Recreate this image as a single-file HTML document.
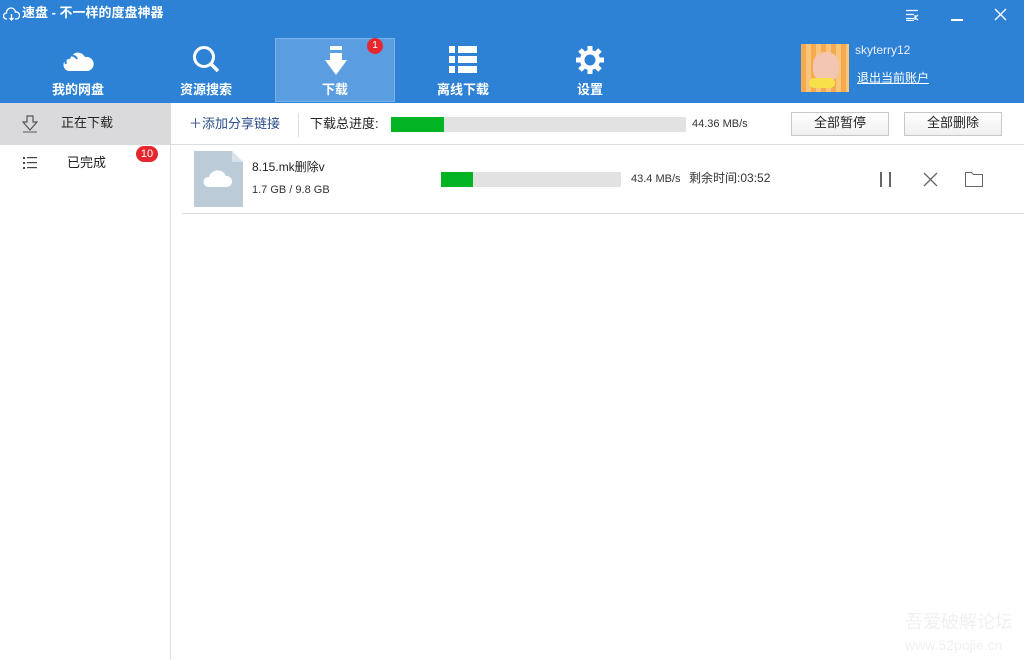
<!DOCTYPE html>
<html><head><meta charset="utf-8"><style>
*{margin:0;padding:0;box-sizing:border-box}
body{width:1024px;height:660px;overflow:hidden;background:#fff;font-family:"Liberation Sans","Noto Sans CJK SC",sans-serif;position:relative}
.hdr{position:absolute;left:0;top:0;width:1024px;height:103px;background:#2d82d6;color:#fff}
.abs{position:absolute;white-space:nowrap;line-height:1.2}
.nav{position:absolute;top:38px;width:120px;height:64px;text-align:center;font-size:13px;font-weight:bold;color:#fff}
.nav .lbl{position:absolute;top:41px;left:0;width:100%}
.side{position:absolute;left:0;top:103px;width:171px;height:557px;border-right:1px solid #dcdcdc}
.btn{position:absolute;top:112px;width:98px;height:24px;border:1px solid #c8c8c8;background:linear-gradient(#fff,#f0f0f0);font-size:13px;text-align:center;line-height:20px;color:#222}
</style></head><body>
<div class="hdr">
 <svg class="abs" style="left:3px;top:7px" width="17" height="14" viewBox="0 0 17 14"><path d="M4 12H3.5A3 3 0 0 1 3.5 6 4.5 4.5 0 0 1 12.5 5 3.5 3.5 0 0 1 13.5 12H12M8.5 7v6M6.5 11l2 2 2-2" fill="none" stroke="#fff" stroke-width="1.3"/></svg>
 <div class="abs" style="left:22px;top:5px;font-size:13px;font-weight:bold">速盘 - 不一样的度盘神器</div>
 <svg class="abs" style="left:905px;top:9px" width="14" height="12"><path d="M1 1.5h12M1 5.5h8M1 9.5h8M1 11.5h8M10 6v5M10 8.5l3-2.5M10 8.5l3 2.5" stroke="#fff" stroke-width="1.2" fill="none"/></svg>
 <div class="abs" style="left:951px;top:19px;width:12px;height:1.5px;background:#fff"></div>
 <svg class="abs" style="left:994px;top:8px" width="13" height="13"><path d="M1 1l11 11M12 1L1 12" stroke="#fff" stroke-width="1.4"/></svg>
 <div class="nav" style="left:18px"><svg class="abs" style="left:45px;top:12px" width="32" height="22" viewBox="0 0 32 22"><path d="M6 21A6 6 0 0 1 7 9 8 8 0 0 1 22 7 7 7 0 0 1 25 21Z" fill="#fff"/><path d="M3 14A6 6 0 0 1 14 9" fill="none" stroke="#2d82d6" stroke-width="2"/></svg><div class="lbl">我的网盘</div></div>
 <div class="nav" style="left:146px"><svg class="abs" style="left:45px;top:7px" width="30" height="30"><circle cx="13" cy="12" r="9.5" stroke="#fff" stroke-width="3" fill="none"/><path d="M20 19l7 7" stroke="#fff" stroke-width="3.5"/></svg><div class="lbl">资源搜索</div></div>
 <div class="nav" style="left:275px;background:#5a9de0;border:1px solid #7cb2e8"><svg class="abs" style="left:45px;top:7px" width="30" height="30"><rect x="9" y="0" width="12" height="4" fill="#fff"/><rect x="9" y="7" width="12" height="7" fill="#fff"/><path d="M4 14h22L15 29Z" fill="#fff"/></svg><div class="lbl" style="top:40px">下载</div>
  <div class="abs" style="left:91px;top:-1px;width:16px;height:16px;border-radius:8px;background:#e5282e;font-size:10px;line-height:16px;font-weight:normal">1</div></div>
 <div class="nav" style="left:403px"><svg class="abs" style="left:45px;top:8px" width="30" height="28"><g fill="#fff"><rect x="1" y="0" width="6" height="7"/><rect x="10" y="0" width="19" height="7"/><rect x="1" y="10" width="6" height="7"/><rect x="10" y="10" width="19" height="7"/><rect x="1" y="20" width="6" height="7"/><rect x="10" y="20" width="19" height="7"/></g></svg><div class="lbl">离线下载</div></div>
 <div class="nav" style="left:530px"><svg class="abs" style="left:45px;top:7px" width="30" height="30" viewBox="0 0 30 30"><g stroke="#fff" stroke-width="5"><path d="M15 1v28M1 15h28M5 5l20 20M25 5L5 25"/></g><circle cx="15" cy="15" r="10" fill="#fff"/><circle cx="15" cy="15" r="5.5" fill="#2d82d6"/></svg><div class="lbl">设置</div></div>
 <div class="abs" style="left:801px;top:44px;width:48px;height:48px;background:repeating-linear-gradient(90deg,#f6a94f 0 5px,#f9c57a 5px 10px)"><div class="abs" style="left:12px;top:8px;width:26px;height:30px;border-radius:12px;background:#f2c6b0"></div><div class="abs" style="left:8px;top:34px;width:26px;height:10px;border-radius:5px;background:#f7e04a"></div></div>
 <div class="abs" style="left:855px;top:43px;font-size:12px;color:#eef">skyterry12</div>
 <div class="abs" style="left:857px;top:71px;font-size:12px;text-decoration:underline">退出当前账户</div>
</div>
<div class="side">
 <div class="abs" style="left:0;top:0;width:170px;height:42px;background:#dadadc"></div>
 <svg class="abs" style="left:22px;top:12px" width="16" height="18"><path d="M5 1h6v6h4L8 15 1 7h4Z" fill="none" stroke="#555" stroke-width="1.2"/><path d="M1 17h14" stroke="#555"/></svg>
 <div class="abs" style="left:61px;top:12px;font-size:13px;color:#222">正在下载</div>
 <svg class="abs" style="left:22px;top:53px" width="16" height="14"><g fill="#444"><rect x="1" y="1" width="2" height="2"/><rect x="1" y="6" width="2" height="2"/><rect x="1" y="11" width="2" height="2"/><rect x="5" y="1" width="10" height="1.2"/><rect x="5" y="6" width="10" height="1.2"/><rect x="5" y="11" width="10" height="1.2"/></g></svg>
 <div class="abs" style="left:67px;top:52px;font-size:13px;color:#222">已完成</div>
 <div class="abs" style="left:136px;top:43px;width:22px;height:16px;border-radius:8px;background:#e5282e;color:#fff;font-size:11px;text-align:center;line-height:16px">10</div>
</div>
<div class="abs" style="left:189px;top:116px;font-size:13px;color:#2a4e8a">＋添加分享链接</div>
<div class="abs" style="left:298px;top:113px;width:1px;height:24px;background:#ddd"></div>
<div class="abs" style="left:310px;top:116px;font-size:13px;color:#222">下载总进度:</div>
<div class="abs" style="left:391px;top:117px;width:295px;height:15px;background:#e2e2e2"><div style="width:53px;height:15px;background:#00b424"></div></div>
<div class="abs" style="left:692px;top:118px;font-size:11px;color:#333">44.36 MB/s</div>
<div class="btn" style="left:791px">全部暂停</div>
<div class="btn" style="left:904px">全部删除</div>
<div class="abs" style="left:171px;top:144px;width:853px;height:1px;background:#ddd"></div>
<div class="abs" style="left:182px;top:213px;width:842px;height:1px;background:#ddd"></div>
<svg class="abs" style="left:194px;top:151px" width="49" height="56"><path d="M0 0h38l11 11v45H0Z" fill="#bccbd8"/><path d="M38 0v11h11Z" fill="#d8e2ea"/><path d="M14 36a5 5 0 0 1 1-10 9 9 0 0 1 17-1 5.5 5.5 0 0 1 1 11Z" fill="#fff"/></svg>
<div class="abs" style="left:252px;top:160px;font-size:12px;color:#222">8.15.mk删除v</div>
<div class="abs" style="left:252px;top:184px;font-size:11px;color:#333">1.7 GB / 9.8 GB</div>
<div class="abs" style="left:441px;top:172px;width:180px;height:15px;background:#e2e2e2"><div style="width:32px;height:15px;background:#00b424"></div></div>
<div class="abs" style="left:631px;top:173px;font-size:11px;color:#333">43.4 MB/s</div>
<div class="abs" style="left:689px;top:171px;font-size:12px;color:#333">剩余时间:03:52</div>
<div class="abs" style="left:880px;top:172px;width:2px;height:15px;background:#666"></div>
<div class="abs" style="left:889px;top:172px;width:2px;height:15px;background:#666"></div>
<svg class="abs" style="left:923px;top:172px" width="15" height="15"><path d="M1 1l13 13M14 1L1 14" stroke="#666" stroke-width="1.3"/></svg>
<svg class="abs" style="left:965px;top:172px" width="18" height="15"><path d="M.5 .5h6l2 2h9v12H.5Z" fill="none" stroke="#666"/></svg>
<div class="abs" style="left:905px;top:612px;font-size:18px;color:#f0f0f0">吾爱破解论坛</div>
<div class="abs" style="left:905px;top:637px;font-size:14px;color:#f0f0f0">www.52pojie.cn</div>
</body></html>
